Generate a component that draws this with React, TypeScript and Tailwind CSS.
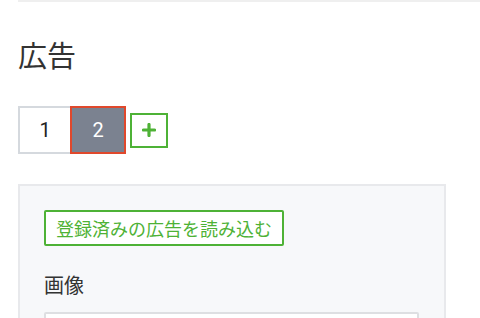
import React from 'react';

const jp = { fontFamily: '"Noto Sans CJK JP", "Noto Sans", sans-serif' };
const num = { fontFamily: 'Roboto, "Liberation Sans", sans-serif' };

export default function App() {
  return (
    <div className="w-[480px] h-[318px] overflow-hidden bg-white" style={jp}>
      <div className="ml-[18px] h-[2px] bg-[#efefef]" />
      <div className="px-[18px]">
        <h1 className="mt-[35px] text-[29px] leading-[34px] text-[#333] font-normal">広告</h1>

        <div className="mt-[35px] flex items-center">
          <button
            className="w-[54px] h-[48px] border-2 border-[#d5d9de] bg-white text-[20px] text-[#222] flex items-center justify-center"
            style={num}
          >
            1
          </button>
          <button
            className="-ml-[2px] w-[56px] h-[48px] border-2 border-[#e0482c] bg-[#7b8290] text-[20px] text-white flex items-center justify-center"
            style={num}
          >
            2
          </button>
          <button className="ml-[4px] w-[38px] h-[35px] border-2 border-[#4eb236] bg-white flex items-center justify-center">
            <svg width="14" height="14" viewBox="0 0 14 14">
              <path d="M7 1.5v11M1.5 7h11" stroke="#4eb236" strokeWidth="3.2" strokeLinecap="round" />
            </svg>
          </button>
        </div>

        <div className="mt-[30px] w-[428px] border-2 border-[#e8e9ec] bg-[#f7f8fa] p-[24px]">
          <button className="h-[36px] px-[10px] border-2 border-[#4eb236] rounded-[2px] bg-white text-[18px] leading-none text-[#4eb236] flex items-center">
            登録済みの広告を読み込む
          </button>
          <div className="mt-[24px] text-[20px] leading-[30px] text-[#333]">画像</div>
          <div className="mt-[12px] w-[375px] h-[40px] border-2 border-[#dedfe2] bg-white rounded-[2px]" />
        </div>
      </div>
    </div>
  );
}
